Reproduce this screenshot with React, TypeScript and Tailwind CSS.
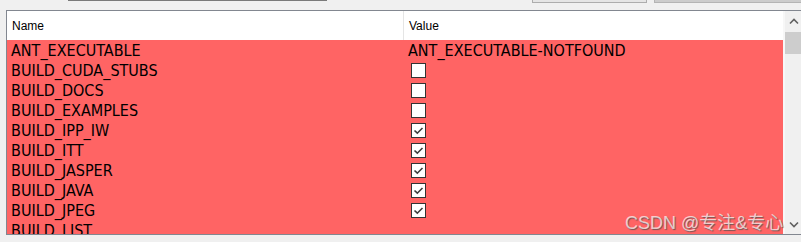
import React from "react";

type Row = { name: string; value?: string; checked?: boolean };

const rows: Row[] = [
  { name: "ANT_EXECUTABLE", value: "ANT_EXECUTABLE-NOTFOUND" },
  { name: "BUILD_CUDA_STUBS", checked: false },
  { name: "BUILD_DOCS", checked: false },
  { name: "BUILD_EXAMPLES", checked: false },
  { name: "BUILD_IPP_IW", checked: true },
  { name: "BUILD_ITT", checked: true },
  { name: "BUILD_JASPER", checked: true },
  { name: "BUILD_JAVA", checked: true },
  { name: "BUILD_JPEG", checked: true },
  { name: "BUILD_LIST", value: "" },
];

function CheckBox({ checked }: { checked: boolean }) {
  return (
    <div className="w-[15px] h-[15px] border border-[#333333] bg-white flex items-center justify-center">
      {checked && (
        <svg width="11" height="11" viewBox="0 0 11 11">
          <path d="M1.5 5.5 L4.3 8.2 L9.5 3" fill="none" stroke="#3c3c3c" strokeWidth="1.6" />
        </svg>
      )}
    </div>
  );
}

export default function App() {
  return (
    <div className="relative w-[801px] h-[242px] bg-[#f0f0f0] overflow-hidden font-['Liberation_Sans',sans-serif]">
      {/* top toolbar edges */}
      <div className="flex h-[10px] items-start">
        <div className="ml-[68px] w-[265px] h-[1px] bg-[#7a7a7a]"></div>
        <div className="ml-[205px] w-[118px] h-[3px] bg-[#e5e5e5] border-x border-b border-[#adadad]"></div>
        <div className="ml-[7px] w-[150px] h-[3px] bg-[#cccccc] border-l border-b border-[#b4b4b4]"></div>
      </div>

      {/* table */}
      <div className="ml-[6px] w-[800px] h-[225px] border-t border-l border-b border-[#828790] bg-white flex">
        <div className="w-[776px] flex flex-col overflow-hidden">
          <div className="h-[29px] shrink-0 flex bg-white text-[12px] text-black">
            <div className="w-[397px] pl-[5px] flex items-center border-r border-[#e5e5e5]">Name</div>
            <div className="pl-[5px] flex items-center">Value</div>
          </div>
          <div className="flex-1 bg-[#ff6464] font-['DejaVu_Sans_Condensed','Liberation_Sans',sans-serif] text-[16px] text-black">
            {rows.map((r) => (
              <div key={r.name} className="h-[20px] flex items-start">
                <div className="w-[398px] pl-[4px] pt-[2px] leading-[18px] whitespace-nowrap">{r.name}</div>
                {r.value !== undefined ? (
                  <div className="pl-[3px] pt-[2px] leading-[18px] whitespace-nowrap">{r.value}</div>
                ) : (
                  <div className="ml-[6px] pt-[3px]">
                    <CheckBox checked={!!r.checked} />
                  </div>
                )}
              </div>
            ))}
          </div>
        </div>

        {/* scrollbar */}
        <div className="w-[2px] bg-[#f7f7f7]"></div>
        <div className="w-[17px] bg-[#f0f0f0] flex flex-col">
          <div className="h-[21px] flex items-center justify-center">
            <svg width="10" height="7" viewBox="0 0 10 7">
              <path d="M1 5.5 L5 1.5 L9 5.5" fill="none" stroke="#606060" strokeWidth="1.6" />
            </svg>
          </div>
          <div className="h-[22px] bg-[#cdcdcd]"></div>
          <div className="flex-1"></div>
          <div className="h-[19px] flex items-start justify-center pt-[6px]">
            <svg width="10" height="7" viewBox="0 0 10 7">
              <path d="M1 1.5 L5 5.5 L9 1.5" fill="none" stroke="#606060" strokeWidth="1.6" />
            </svg>
          </div>
        </div>
      </div>

      {/* watermark */}
      <div className="absolute left-[625px] top-[212px] text-[18px] leading-[22px] text-white/70 whitespace-nowrap font-['Liberation_Sans','Noto_Sans_CJK_SC',sans-serif] [text-shadow:1px_1px_1px_rgba(80,80,80,0.8)]">
        CSDN @专注&amp;专心
      </div>
    </div>
  );
}
